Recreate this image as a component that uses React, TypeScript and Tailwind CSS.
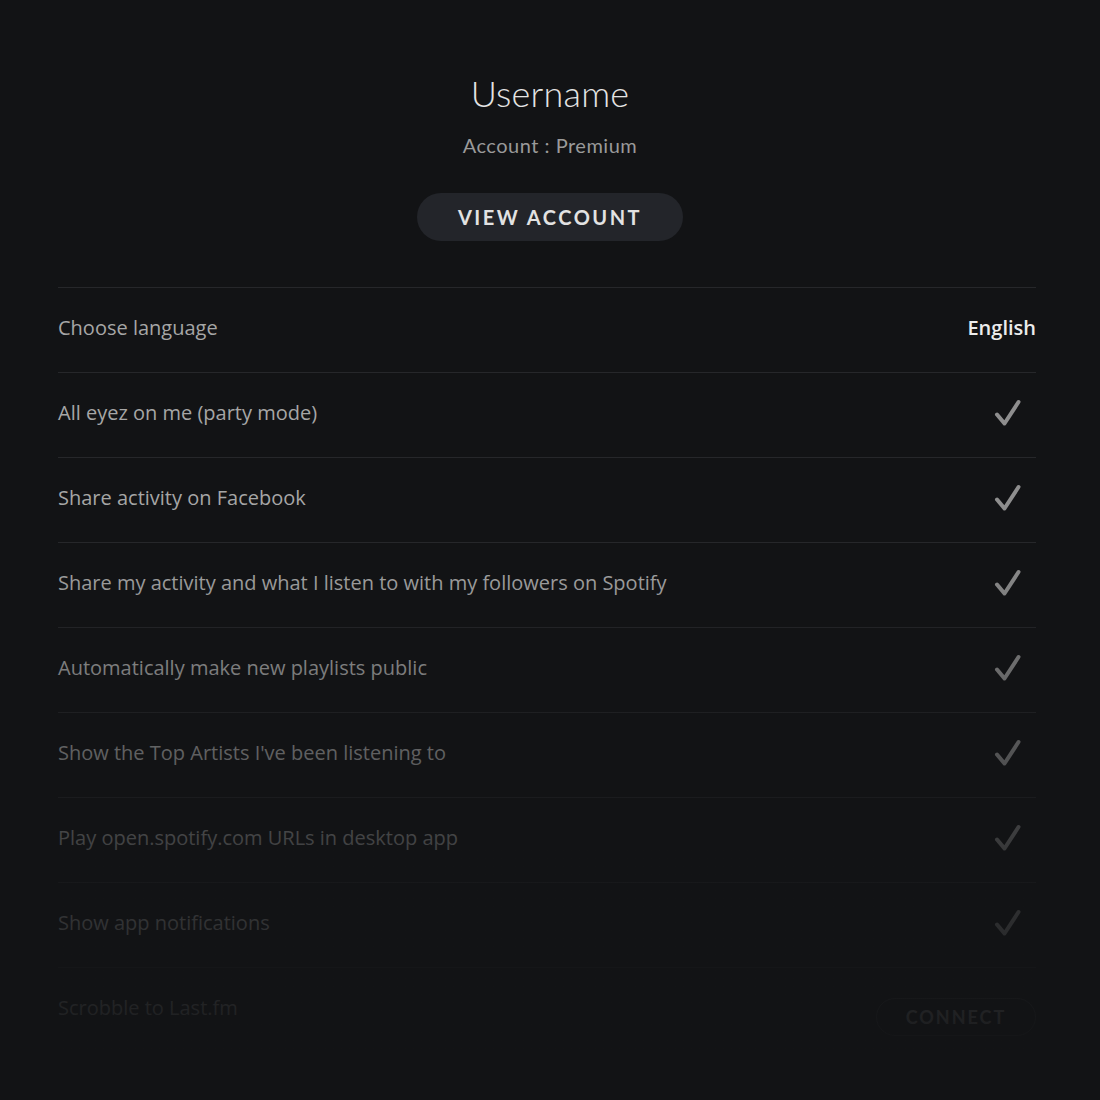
import React from 'react';

const ROWS = [
  'All eyez on me (party mode)',
  'Share activity on Facebook',
  'Share my activity and what I listen to with my followers on Spotify',
  'Automatically make new playlists public',
  "Show the Top Artists I've been listening to",
  'Play open.spotify.com URLs in desktop app',
  'Show app notifications',
];

const Check: React.FC = () => (
  <svg width="28" height="30" viewBox="0 0 28 30" className="mr-[14px]">
    <path
      d="M3 16.5 L10.5 25.5 L24.5 4"
      fill="none"
      stroke="#8e8e8e"
      strokeWidth="4"
      strokeLinecap="round"
      strokeLinejoin="round"
    />
  </svg>
);

const App: React.FC = () => {
  return (
    <div className="min-h-[1100px] w-full bg-[#121315] font-['Lato','Open_Sans',sans-serif] overflow-hidden">
      <div className="flex flex-col items-center pt-[69px]">
        <h1 className="text-[36px] font-light text-[#e4e4e4] leading-[48px] tracking-[0.2px]">Username</h1>
        <p className="mt-[15px] text-[20px] text-[#9a9a9a] leading-[26px] tracking-[0.5px]">Account : Premium</p>
        <button className="mt-[35px] h-[48px] w-[266px] rounded-full bg-[#23252a] text-[20px] font-bold tracking-[2.5px] text-[#e2e2e2]">
          VIEW ACCOUNT
        </button>
      </div>

      <div className="relative ml-[58px] mr-[64px] mt-[46px] font-['Open_Sans',sans-serif] text-[20px]">
        <div className="flex h-[85px] items-center justify-between border-t border-[#26272a] pb-[4px]">
          <span className="text-[#a6a6a6]">Choose language</span>
          <span className="font-semibold text-[#ececec]">English</span>
        </div>
        {ROWS.map((label) => (
          <div
            key={label}
            className="flex h-[85px] items-center justify-between border-t border-[#26272a] pb-[4px]"
          >
            <span className="text-[#a6a6a6]">{label}</span>
            <Check />
          </div>
        ))}
        <div className="flex h-[85px] items-center justify-between border-t border-[#26272a] pb-[4px]">
          <span className="text-[#a6a6a6]">Scrobble to Last.fm</span>
          <button className="mt-[18px] h-[38px] w-[160px] rounded-full border border-[#3a3b3e] font-['Lato',sans-serif] text-[18px] font-bold tracking-[2px] text-[#a6a6a6]">
            CONNECT
          </button>
        </div>
        <div className="pointer-events-none absolute inset-x-0 top-[260px] bottom-0 bg-linear-to-b from-[#121315]/0 via-[#121315]/70 via-60% to-[#121315]/95" />
      </div>
    </div>
  );
};

export default App;
